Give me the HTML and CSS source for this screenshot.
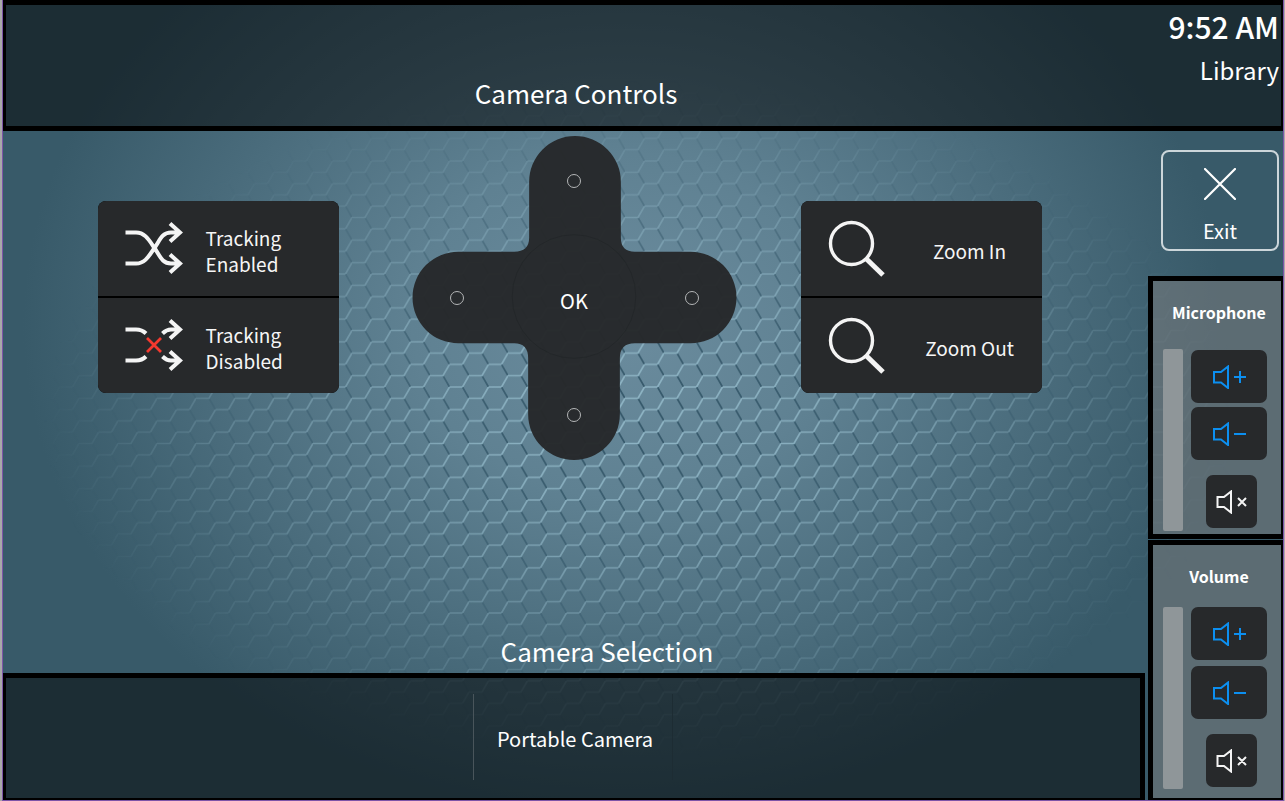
FILE: index.html
```html
<!DOCTYPE html>
<html lang="en">
<head>
<meta charset="utf-8">
<meta name="viewport" content="width=device-width, initial-scale=1">
<title>Camera Controls</title>
<link rel="stylesheet" href="styles.css">
</head>
<body>
<svg class="symbols" aria-hidden="true">
  <symbol id="magnifier" viewBox="0 0 58 57">
    <circle cx="23.500" cy="23.500" r="21" fill="none" stroke="#f4f4f4" stroke-width="3.400"/>
    <path d="M38 38.500L55 55" fill="none" stroke="#f4f4f4" stroke-width="5"/>
  </symbol>
  <symbol id="speaker-plus" viewBox="0 0 34 24">
    <path d="M2 7h7l7-5.500v21.500l-7-5.500H2zM22 12h12M28 6v12" fill="none" stroke="currentColor" stroke-width="2"/>
  </symbol>
  <symbol id="speaker-minus" viewBox="0 0 34 24">
    <path d="M2 7h7l7-5.500v21.500l-7-5.500H2zM22 12h12" fill="none" stroke="currentColor" stroke-width="2"/>
  </symbol>
  <symbol id="speaker-mute" viewBox="0 0 32 24">
    <path d="M1.500 7h6.500l7-5.500v21l-7-5.500H1.500zM22 8l8 8M30 8l-8 8" fill="none" stroke="currentColor" stroke-width="2"/>
  </symbol>
</svg>
<div class="app">
  <svg class="backdrop" viewBox="0 0 1280 800" preserveAspectRatio="xMidYMid slice" aria-hidden="true">
    <defs>
      <radialGradient id="glow" gradientUnits="userSpaceOnUse" cx="0" cy="0" r="1" gradientTransform="translate(620 325) scale(600 490)">
        <stop offset="0" stop-color="#6b8c9e"/>
        <stop offset=".35" stop-color="#5f8192"/>
        <stop offset=".7" stop-color="#4a6c7c"/>
        <stop offset="1" stop-color="#385a69"/>
      </radialGradient>
      <radialGradient id="fade" gradientUnits="userSpaceOnUse" cx="0" cy="0" r="1" gradientTransform="translate(640 420) scale(600 340)">
        <stop offset="0" stop-color="#fff"/>
        <stop offset=".25" stop-color="#fff" stop-opacity=".85"/>
        <stop offset=".65" stop-color="#fff" stop-opacity=".35"/>
        <stop offset="1" stop-color="#fff" stop-opacity="0"/>
      </radialGradient>
      <pattern id="hex" patternUnits="userSpaceOnUse" x="622" y="387" width="39" height="22.600">
        <path d="M13 11.300L19.500 22.600M32.500 0L39 11.300" fill="none" stroke="#345769" stroke-width="1.700"/>
        <path d="M0 11.300H13L19.500 0M32.500 22.600L39 11.300" fill="none" stroke="#8fb5c5" stroke-width="1.700"/>
        <path d="M19.500 0H32.500M19.500 22.600H32.500" fill="none" stroke="#8fb5c5" stroke-width="1.700"/>
      </pattern>
      <mask id="spot"><rect width="1280" height="800" fill="url(#fade)"/></mask>
    </defs>
    <rect width="1280" height="800" fill="url(#glow)"/>
    <rect width="1280" height="800" fill="url(#hex)" mask="url(#spot)"/>
  </svg>

  <header class="topbar">
    <h1 class="heading topbar-title">Camera Controls</h1>
    <div class="status">
      <time class="clock">9:52 AM</time>
      <span class="room">Library</span>
    </div>
  </header>

  <div class="body">
    <main class="main">
      <section class="controls">
        <div class="card card-tracking">
          <button class="card-row" type="button">
            <svg class="icon-shuffle" viewBox="0 0 58 52" fill="none" stroke="#f4f4f4" stroke-width="4" aria-hidden="true">
              <path d="M.5 10.500H11C20 10.500 24 18 29.500 26S37 41.500 46 41.500H54M.5 41.500H11C20 41.500 24 34 29.500 26S37 10.500 46 10.500H54M45 1.500L55 10.500L45 19.500M45 32.500L55 41.500L45 50.500"/>
            </svg>
            <span class="card-text">Tracking<br>Enabled</span>
          </button>
          <button class="card-row" type="button">
            <svg class="icon-shuffle" viewBox="0 0 58 52" fill="none" stroke="#f4f4f4" stroke-width="4" aria-hidden="true">
              <path d="M.5 10.500H11Q17 10.500 21 14.500M.5 41.500H11Q17 41.500 21 37.500M37.500 14.500Q41.500 10.500 46 10.500H54M37.500 37.500Q41.500 41.500 46 41.500H54M45 1.500L55 10.500L45 19.500M45 32.500L55 41.500L45 50.500"/>
              <path d="M22 19L36 33M36 19L22 33" stroke="#f5392f" stroke-width="2.800"/>
            </svg>
            <span class="card-text">Tracking<br>Disabled</span>
          </button>
        </div>

        <div class="dpad">
          <svg class="dpad-shape" viewBox="0 0 325 325" aria-hidden="true">
            <path d="M117 46A46 46 0 0 1 209 46V102Q209 116 223 116H279A46 46 0 0 1 279 208H223Q208 208 208 223V279A46 46 0 0 1 116 279V223Q116 208 102 208H46A46 46 0 0 1 46 116H102Q117 116 117 102Z" fill="#26282a" fill-opacity=".97"/>
            <circle cx="162" cy="161" r="62" fill="none" stroke="#1f2325" stroke-opacity=".5"/>
          </svg>
          <button class="pad pad-up" type="button" aria-label="Tilt up"><span class="dot"></span></button>
          <button class="pad pad-left" type="button" aria-label="Pan left"><span class="dot"></span></button>
          <button class="pad pad-ok" type="button">OK</button>
          <button class="pad pad-right" type="button" aria-label="Pan right"><span class="dot"></span></button>
          <button class="pad pad-down" type="button" aria-label="Tilt down"><span class="dot"></span></button>
        </div>

        <div class="card card-zoom">
          <button class="card-row" type="button">
            <svg class="icon-zoom" aria-hidden="true"><use href="#magnifier"/></svg>
            <span class="card-text">Zoom In</span>
          </button>
          <button class="card-row" type="button">
            <svg class="icon-zoom" aria-hidden="true"><use href="#magnifier"/></svg>
            <span class="card-text">Zoom Out</span>
          </button>
        </div>
      </section>

      <section class="selection">
        <h2 class="heading selection-title">Camera Selection</h2>
        <div class="camera-bar">
          <button class="camera" type="button">Portable Camera</button>
        </div>
      </section>
    </main>

    <aside class="side">
      <button class="exit" type="button">
        <svg class="icon-exit" viewBox="0 0 32 32" aria-hidden="true"><path d="M1 1L31 31M31 1L1 31" stroke="#fff" stroke-width="2.200" stroke-linecap="round"/></svg>
        <span>Exit</span>
      </button>

      <section class="panel panel-mic">
        <h2 class="panel-title">Microphone</h2>
        <div class="panel-body">
          <div class="level" role="meter" aria-label="Microphone level" aria-valuenow="0"></div>
          <div class="panel-buttons">
            <button class="key" type="button" aria-label="Microphone up"><svg class="icon-level" aria-hidden="true"><use href="#speaker-plus"/></svg></button>
            <button class="key" type="button" aria-label="Microphone down"><svg class="icon-level" aria-hidden="true"><use href="#speaker-minus"/></svg></button>
            <button class="key key-mute" type="button" aria-label="Mute microphone"><svg class="icon-mute" aria-hidden="true"><use href="#speaker-mute"/></svg></button>
          </div>
        </div>
      </section>

      <section class="panel panel-volume">
        <h2 class="panel-title">Volume</h2>
        <div class="panel-body">
          <div class="level" role="meter" aria-label="Volume level" aria-valuenow="0"></div>
          <div class="panel-buttons">
            <button class="key" type="button" aria-label="Volume up"><svg class="icon-level" aria-hidden="true"><use href="#speaker-plus"/></svg></button>
            <button class="key" type="button" aria-label="Volume down"><svg class="icon-level" aria-hidden="true"><use href="#speaker-minus"/></svg></button>
            <button class="key key-mute" type="button" aria-label="Mute volume"><svg class="icon-mute" aria-hidden="true"><use href="#speaker-mute"/></svg></button>
          </div>
        </div>
      </section>
    </aside>
  </div>
</div>
</body>
</html>
```

FILE: styles.css
```css
* {
  box-sizing: border-box;
}

body {
  margin: 0;
  padding: 0 1px 0 2px;
  background: #a9a9a9;
  color: #fff;
  font-family: "Noto Sans CJK SC", "Noto Sans", sans-serif;
  font-size: 20px;
}

button {
  margin: 0;
  padding: 0;
  border: 0;
  background: none;
  color: inherit;
  font: inherit;
  cursor: pointer;
}

h1,
h2 {
  margin: 0;
}

svg {
  display: block;
}

.symbols {
  position: absolute;
  width: 0;
  height: 0;
}

.app {
  position: relative;
  display: flex;
  flex-direction: column;
  min-height: 100vh;
  border: 1px solid #7d54a8;
  border-top: 0;
  overflow: hidden;
}

.backdrop {
  position: absolute;
  inset: 0;
  width: 100%;
  height: 100%;
}

.heading {
  font-size: 26px;
  font-weight: 400;
  line-height: 36px;
  text-align: center;
}

/* Top bar */
.topbar {
  position: relative;
  display: grid;
  grid-template-columns: 1fr 135px;
  border: solid #000;
  border-width: 5px 2px 5px 3px;
  background: rgba(0, 0, 0, 0.5);
}

.topbar-title {
  padding: 70px 0 15px;
}

.status {
  display: flex;
  flex-direction: column;
  align-items: flex-end;
  padding-right: 2px;
  line-height: 43px;
  white-space: nowrap;
}

.clock {
  font-size: 30px;
  font-weight: 500;
}

.room {
  font-size: 24px;
}

/* Body */
.body {
  position: relative;
  flex: 1;
  display: grid;
  grid-template-columns: 1fr 135px;
  gap: 3px;
}

.main {
  display: flex;
  flex-direction: column;
  justify-content: space-between;
  padding-top: 5px;
}

.controls {
  display: grid;
  grid-template-columns: 1fr auto 1fr;
  align-items: center;
}

.card {
  width: 241px;
  display: grid;
  gap: 2px;
  margin-bottom: 3px;
  border-radius: 8px;
  background: #000;
  color: #f6f6f6;
  overflow: hidden;
}

.card-tracking {
  justify-self: end;
  margin-right: 73px;
}

.card-zoom {
  margin-left: 64px;
}

.card-row {
  display: flex;
  align-items: center;
  height: 95px;
  padding-left: 27px;
  background: #27292b;
  font-size: 19px;
  line-height: 26px;
  text-align: left;
}

.card-text {
  padding-top: 6px;
}

.card-tracking .card-text {
  margin-left: 23px;
}

.card-zoom .card-text {
  flex: 1;
  margin-left: 12px;
  text-align: center;
}

.icon-shuffle {
  width: 58px;
  height: 52px;
}

.icon-zoom {
  width: 58px;
  height: 57px;
}

/* Direction pad */
.dpad {
  position: relative;
  display: grid;
  grid-template-columns: 117px 91px 117px;
  grid-template-rows: 116px 91px 117px;
  grid-template-areas: ". up ." "left ok right" ". down .";
}

.dpad-shape {
  position: absolute;
  inset: 0;
  width: 100%;
  height: 100%;
}

.pad {
  position: relative;
  display: flex;
  align-items: center;
  justify-content: center;
}

.pad-up {
  grid-area: up;
  align-items: flex-start;
  padding-top: 38px;
}

.pad-left {
  grid-area: left;
  justify-content: flex-start;
  padding-left: 38px;
}

.pad-ok {
  grid-area: ok;
  padding-top: 6px;
}

.pad-right {
  grid-area: right;
  justify-content: flex-end;
  padding-right: 38px;
}

.pad-down {
  grid-area: down;
  align-items: flex-end;
  padding-bottom: 38px;
}

.dot {
  width: 14px;
  height: 14px;
  border: 1px solid #b4b6b7;
  border-radius: 50%;
}

/* Camera selection */
.selection-title {
  padding: 0 0 4px 66px;
}

.camera-bar {
  display: flex;
  justify-content: center;
  padding: 16px 0 18px;
  border: solid #000;
  border-width: 5px 5px 2px 3px;
  background: rgba(0, 0, 0, 0.5);
}

.camera {
  width: 200px;
  height: 86px;
  padding: 2px 0 0 23px;
  border-left: 1px solid #49555b;
  border-right: 1px solid #1d2c33;
  text-align: left;
  white-space: nowrap;
}

/* Side column */
.side {
  display: flex;
  flex-direction: column;
}

.exit {
  display: flex;
  flex-direction: column;
  align-items: center;
  gap: 16px;
  width: 118px;
  height: 101px;
  margin: 19px 0 25px 13px;
  padding-top: 16px;
  border: 2px solid #ccd6da;
  border-radius: 8px;
  line-height: 30px;
}

.icon-exit {
  width: 32px;
  height: 32px;
}

.panel {
  border: solid #000;
  border-width: 5px 2px 5px 5px;
  background: rgba(128, 126, 126, 0.5);
}

.panel-mic {
  margin-bottom: 1px;
  padding-bottom: 3px;
}

.panel-volume {
  flex: 1;
  border-bottom-width: 2px;
}

.panel-title {
  padding-left: 4px;
  font-size: 16px;
  font-weight: 700;
  line-height: 62px;
  text-align: center;
}

.panel-mic .panel-title {
  margin-bottom: 6px;
}

.panel-body {
  display: flex;
  gap: 8px;
  padding-left: 10px;
}

.level {
  width: 20px;
  height: 182px;
  border-radius: 2px;
  background: #8f9699;
}

.panel-buttons {
  display: flex;
  flex-direction: column;
  align-items: center;
  gap: 4px;
  padding-top: 1px;
}

.panel-volume .panel-buttons {
  gap: 6px;
  padding-top: 0;
}

.key {
  display: flex;
  align-items: center;
  justify-content: center;
  width: 76px;
  height: 53px;
  border-radius: 7px;
  background: #27292b;
  color: #0c8ff0;
}

.key-mute {
  width: 51px;
  margin: 11px 0 0 5px;
  color: #f4f4f4;
}

.panel-volume .key-mute {
  margin-top: 9px;
}

.icon-level {
  width: 34px;
  height: 24px;
}

.icon-mute {
  width: 32px;
  height: 24px;
}
```
